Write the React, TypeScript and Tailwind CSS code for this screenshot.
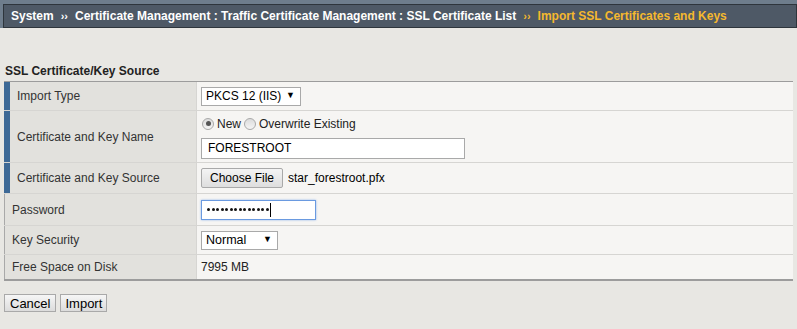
import { ReactNode } from "react";

const FONT = { fontFamily: '"Liberation Sans", Arial, sans-serif' };

interface RowParams {
  label: string;
  required?: boolean;
  height: string;
  last?: boolean;
  children: ReactNode;
}

function Row({ label, required, height, last, children }: RowParams) {
  return (
    <div
      className={`flex ${height} ${last ? "" : "border-b border-[#d6d5d2]"}`}
    >
      <div
        className={`flex w-[192px] items-center bg-[#e2e1dd] ${
          required
            ? "border-l-[6px] border-[#3d6996] pl-[7px]"
            : "border-l border-[#a9a9a9] pl-[7px]"
        }`}
      >
        <span className="text-[12px] text-[#333]">{label}</span>
      </div>
      <div className="flex flex-1 flex-col justify-center border-l border-[#d6d5d2] bg-[#f6f5f3] pl-[4px]">
        {children}
      </div>
    </div>
  );
}

function Select({ value, width }: { value: string; width: string }) {
  return (
    <div
      className={`flex h-[19px] ${width} items-center justify-between whitespace-nowrap border border-[#a9a9a9] bg-white pl-[4px] pr-[5px] text-[12.5px] text-black`}
    >
      <span>{value}</span>
      <span className="text-[9px]">▼</span>
    </div>
  );
}

function Radio({ checked }: { checked?: boolean }) {
  return (
    <span className="inline-flex size-[12px] items-center justify-center rounded-full border border-[#a9a9a9] bg-gradient-to-b from-[#dcdcdc] to-[#f5f5f5]">
      {checked && <span className="size-[5px] rounded-full bg-[#555]" />}
    </span>
  );
}

export default function App() {
  const dots = Array.from({ length: 14 });

  return (
    <div className="h-[329px] w-[797px] bg-[#e8e7e3]" style={FONT}>
      <div className="bg-[#6e7d8c] pl-[3px] pt-[4px]">
        <div className="flex h-[24px] items-center whitespace-nowrap border border-[#2e353c] bg-[#4e5966] pl-[7px] text-[12px] font-bold text-white">
          <span>System</span>
          <span className="mx-[7px] text-[11px]">››</span>
          <span>
            Certificate Management : Traffic Certificate Management : SSL
            Certificate List
          </span>
          <span className="mx-[7px] text-[11px] text-[#f5b82e]">››</span>
          <span className="text-[#f5b82e]">Import SSL Certificates and Keys</span>
        </div>
      </div>

      <div className="px-[4px] pt-[36px]">
        <h2 className="mb-[3px] pl-[1px] text-[12px] font-bold leading-[14px] text-[#222]">
          SSL Certificate/Key Source
        </h2>
        <div className="border-b-2 border-t border-[#9c9c9c]">
          <Row height="h-[29px]" label="Import Type" required>
            <Select value="PKCS 12 (IIS)" width="w-[100px] text-[12px]" />
          </Row>
          <Row height="h-[52px]" label="Certificate and Key Name" required>
            <div className="flex items-center gap-[3px] pl-[1px] text-[12px] text-[#222]">
              <Radio checked />
              <span>New</span>
              <Radio />
              <span>Overwrite Existing</span>
            </div>
            <div className="mt-[5px] flex h-[21px] w-[264px] items-center border border-[#a9a9a9] bg-white pl-[6px] text-[12px] text-black">
              FORESTROOT
            </div>
          </Row>
          <Row height="h-[31px]" label="Certificate and Key Source" required>
            <div className="flex items-center gap-[5px] text-[12px] text-black">
              <span className="flex h-[20px] items-center rounded-[2px] border border-[#a9a9a9] bg-gradient-to-b from-[#f4f4f4] to-[#dedede] px-[8px]">
                Choose File
              </span>
              <span>star_forestroot.pfx</span>
            </div>
          </Row>
          <Row height="h-[32px]" label="Password">
            <div className="flex h-[20px] w-[115px] items-center border border-[#6a9ae0] bg-white pl-[5px] shadow-[0_0_2px_#8fb4ea]">
              <div className="flex items-center gap-[1.5px]">
                {dots.map((_, i) => (
                  <span className="size-[3px] rounded-full bg-[#111]" key={i} />
                ))}
              </div>
              <span className="ml-[1px] h-[14px] w-px bg-black" />
            </div>
          </Row>
          <Row height="h-[29px]" label="Key Security">
            <Select value="Normal" width="w-[77px]" />
          </Row>
          <Row height="h-[24px]" label="Free Space on Disk" last>
            <span className="text-[12px] text-[#222]">7995 MB</span>
          </Row>
        </div>
        <div className="mt-[13px] flex gap-[4px] text-[13px] text-black">
          <button className="h-[18px] border border-[#a9a9a9] bg-gradient-to-b from-[#f6f6f6] to-[#dcdcdc] px-[5px] leading-none">
            Cancel
          </button>
          <button className="h-[18px] border border-[#a9a9a9] bg-gradient-to-b from-[#f6f6f6] to-[#dcdcdc] px-[4px] leading-none">
            Import
          </button>
        </div>
      </div>
    </div>
  );
}
